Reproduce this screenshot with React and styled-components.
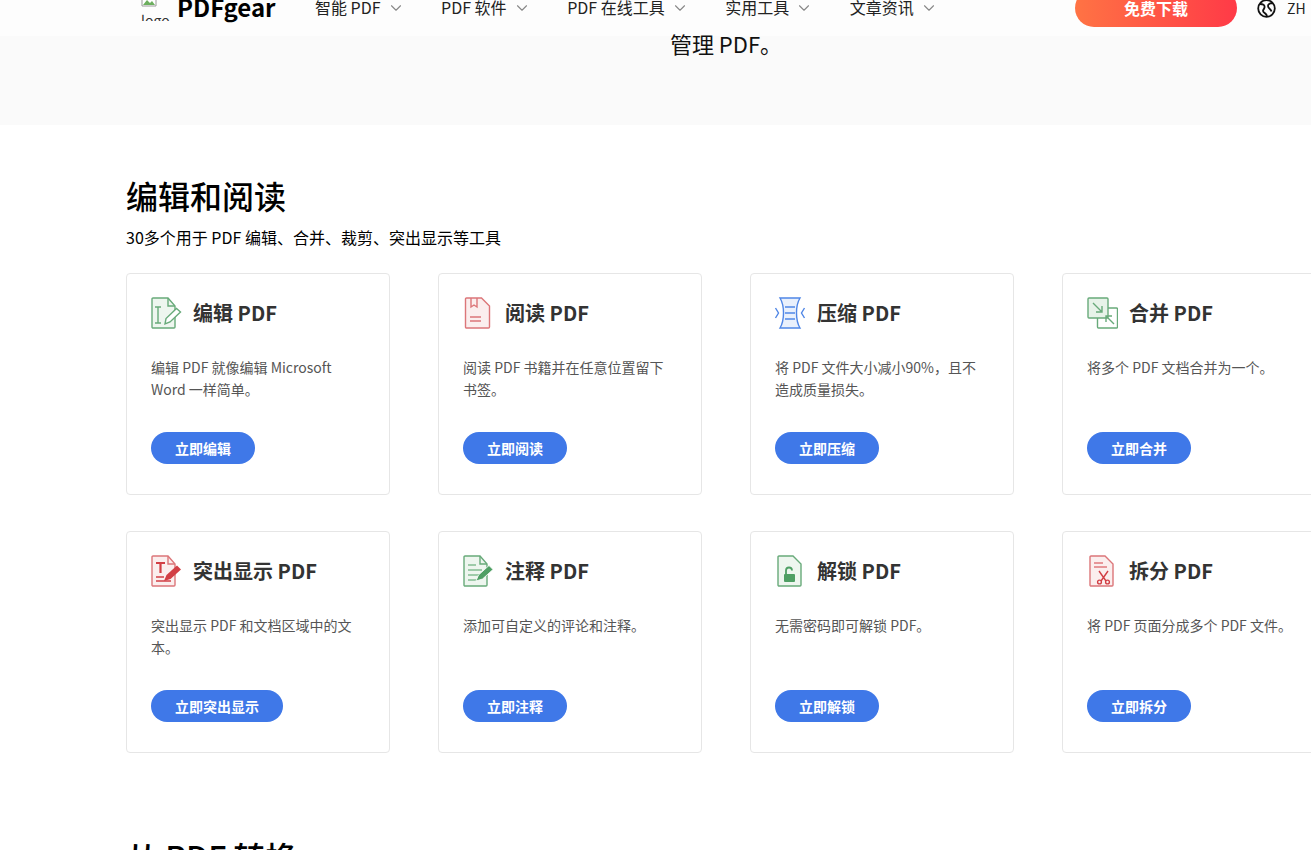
import React from "react";
import styled, { createGlobalStyle } from "styled-components";
import { ChevronDown } from "lucide-react";

const GlobalStyle = createGlobalStyle`
  html, body {
    margin: 0;
    height: 100%;
    overflow: hidden;
    background: #fff;
    font-family: "Noto Sans CJK SC", "Noto Sans", sans-serif;
    color: #000;
  }
`;

const Page = styled.div`
  width: 1452px;
  margin-top: -20px;
`;

const Nav = styled.header`
  height: 56px;
  background: #fdfdfd;
  display: flex;
  align-items: center;
  padding-left: 141px;
`;

const Logo = styled.a`
  display: flex;
  align-items: center;
  width: 174px;
  height: 56px;
`;

const BrokenImage = styled.span`
  display: block;
  width: 29px;
  height: 30px;
  margin: 11px 7px 0 0;
  overflow: hidden;
  align-self: flex-start;
  font-size: 14px;
  line-height: 26px;
  color: #333;
`;

const BrokenIcon = styled.svg`
  display: block;
  width: 16px;
  height: 16px;
`;

const LogoText = styled.span`
  font-size: 24px;
  font-weight: 700;
  line-height: 30px;
  margin-top: -2px;
`;

const NavList = styled.nav`
  display: flex;
  width: 760px;
  margin-top: -2px;
`;

const NavItem = styled.a`
  display: flex;
  align-items: center;
  gap: 6px;
  margin-right: 36.5px;
  font-size: 16px;
  line-height: 24px;
  color: #222;

  svg {
    margin-top: 2px;
    color: #888;
    stroke-width: 1.5;
  }
`;

const DownloadButton = styled.a`
  display: block;
  width: 162px;
  height: 38px;
  border-radius: 19px;
  background: linear-gradient(90deg, #ff7344, #ff3a47);
  color: #fff;
  font-size: 16px;
  font-weight: 700;
  line-height: 38px;
  text-align: center;
`;

const Lang = styled.a`
  display: flex;
  align-items: center;
  gap: 11px;
  margin-left: 20px;
  font-size: 14px;
  color: #222;
`;

const Hero = styled.section`
  height: 89px;
  background: #fafafa;
  font-size: 22px;
  line-height: 14px;
  text-align: center;
  color: #111;
`;

const Section = styled.section`
  padding: 50px 126px 0;
`;

const SectionTitle = styled.h2`
  margin: 0;
  font-size: 32px;
  font-weight: 500;
  line-height: 40px;
`;

const SectionNote = styled.p`
  margin: 10px 0 24px;
  font-size: 16px;
  line-height: 24px;
`;

const CardGrid = styled.div`
  display: grid;
  grid-template-columns: repeat(4, 264px);
  column-gap: 48px;
  row-gap: 36px;
`;

const Card = styled.article`
  box-sizing: border-box;
  height: 222px;
  padding: 23px 24px 0;
  border: 1px solid #e6e6e6;
  border-radius: 4px;
  background: #fff;
  display: flex;
  flex-direction: column;
  align-items: flex-start;
`;

const CardHead = styled.div`
  display: flex;
  align-items: center;
  gap: 11px;
  height: 32px;
`;

const CardIcon = styled.svg`
  display: block;
  width: 32px;
  height: 32px;
  margin-left: -1px;
  flex: none;
`;

const CardTitle = styled.h3`
  margin: 0;
  font-size: 20px;
  font-weight: 700;
  line-height: 32px;
  color: #333;
`;

const CardText = styled.p`
  margin: 27px 0 0;
  height: 64px;
  font-size: 14px;
  line-height: 22px;
  color: #555;
`;

const CardButton = styled.a`
  display: block;
  height: 32px;
  margin-top: 12px;
  padding: 0 24px;
  border-radius: 16px;
  background: #3f78e8;
  color: #fff;
  font-size: 14px;
  font-weight: 700;
  line-height: 33px;
`;

const NextTitle = styled(SectionTitle)`
  margin-top: 83px;
`;

const green = { line: "#68aa7a", fill: "#eef6ef", solid: "#4f9f64" };
const red = { line: "#dc7679", fill: "#fbeeee", solid: "#d23f45" };
const blue = { line: "#4f86e6", fill: "#e9f0fc" };

const DOC = "M3 1h15l7 8v21a1 1 0 0 1-1 1H3a1 1 0 0 1-1-1V2a1 1 0 0 1 1-1z";
const WIDE_DOC = "M5 1h14l8 8v21a1 1 0 0 1-1 1H5a1 1 0 0 1-1-1V2a1 1 0 0 1 1-1z";

const icons = {
  edit: (
    <g fill="none" stroke={green.line} strokeWidth="1.400">
      <path d={DOC} fill={green.fill} />
      <path d="M18 1v8h7" />
      <path d="M5 10h6M5 26h6M8 10v16" />
      <path d="M15 27l1-5.500 10.500-10 4 3.500-10.500 10z" fill="#fff" />
    </g>
  ),
  read: (
    <g fill={red.fill} stroke={red.line} strokeWidth="1.400" transform="translate(1.500 0)">
      <path d="M3 1h15l8 8v21a1 1 0 0 1-1 1H3a1 1 0 0 1-1-1V2a1 1 0 0 1 1-1z" />
      <path d="M7.500 1v9l3-2 3 2V1" fill="none" />
      <path d="M6.500 20h11M6.500 24h11" fill="none" />
    </g>
  ),
  compress: (
    <g fill="none" stroke={blue.line} strokeWidth="1.400">
      <path d="M6 1h20c-3 5-3.500 10-3.500 15s.5 10 3.500 15H6c3-5 3.500-10 3.500-15S9 6 6 1z" fill={blue.fill} />
      <path d="M11 10h10M11 16h10M11 22h10" />
      <path d="M1.500 11l3 5-3 5M30.500 11l-3 5 3 5" />
    </g>
  ),
  merge: (
    <g fill="none" stroke={green.line} strokeWidth="1.400" transform="translate(1 0)">
      <rect x="10.500" y="11" width="20" height="20" rx="1" fill="#fff" />
      <rect x="1" y="1" width="20" height="20" rx="1" fill="#e7f3e9" />
      <path d="M6 6l9 9M15 9v6H9" />
      <path d="M27 27l-8-8M19 25v-6h6" />
    </g>
  ),
  highlight: (
    <g fill="none" stroke={red.line} strokeWidth="1.400">
      <path d={DOC} fill={red.fill} />
      <path d="M18 1v8h7" />
      <path d="M6 8h9M10.500 8v10" stroke={red.solid} strokeWidth="2.200" />
      <path d="M6 22h8M6 26h15" stroke={red.solid} />
      <path d="M14 26l2.500-6 10.500-9.500 4 4-10.500 9.500z" fill={red.solid} stroke="none" />
    </g>
  ),
  note: (
    <g fill="none" stroke={green.line} strokeWidth="1.400">
      <path d={DOC} fill={green.fill} />
      <path d="M18 1v8h7" />
      <path d="M6 10h8M6 15h14M6 20h12M6 25h9" stroke={green.solid} strokeWidth="1.200" />
      <path d="M14 26l2.500-6 10.500-9.500 4 4-10.500 9.500z" fill={green.solid} stroke="#fff" strokeWidth=".8" />
    </g>
  ),
  unlock: (
    <g fill="none" stroke={green.line} strokeWidth="1.400">
      <path d={WIDE_DOC} fill={green.fill} />
      <path d="M12 19v-3.500a3 3 0 0 1 6 0" stroke={green.solid} strokeWidth="1.800" />
      <rect x="10" y="19" width="11" height="8" rx="1" fill={green.solid} stroke="none" />
    </g>
  ),
  split: (
    <g fill="none" stroke={red.line} strokeWidth="1.400">
      <path d={WIDE_DOC} fill={red.fill} />
      <path d="M8 8h9M8 12h13" stroke={red.solid} strokeWidth="1" />
      <path d="M13 16l7 10M22 16l-7 10" stroke={red.solid} />
      <circle cx="13.500" cy="27" r="1.900" stroke={red.solid} />
      <circle cx="21.500" cy="27" r="1.900" stroke={red.solid} />
    </g>
  ),
};

const navItems = ["智能 PDF", "PDF 软件", "PDF 在线工具", "实用工具", "文章资讯"];

const tools = [
  { icon: "edit", title: "编辑 PDF", text: "编辑 PDF 就像编辑 Microsoft Word 一样简单。", action: "立即编辑" },
  { icon: "read", title: "阅读 PDF", text: "阅读 PDF 书籍并在任意位置留下书签。", action: "立即阅读" },
  { icon: "compress", title: "压缩 PDF", text: "将 PDF 文件大小减小90%，且不造成质量损失。", action: "立即压缩" },
  { icon: "merge", title: "合并 PDF", text: "将多个 PDF 文档合并为一个。", action: "立即合并" },
  { icon: "highlight", title: "突出显示 PDF", text: "突出显示 PDF 和文档区域中的文本。", action: "立即突出显示" },
  { icon: "note", title: "注释 PDF", text: "添加可自定义的评论和注释。", action: "立即注释" },
  { icon: "unlock", title: "解锁 PDF", text: "无需密码即可解锁 PDF。", action: "立即解锁" },
  { icon: "split", title: "拆分 PDF", text: "将 PDF 页面分成多个 PDF 文件。", action: "立即拆分" },
];

const App = () => {
  return (
    <>
      <GlobalStyle />
      <Page>
        <Nav>
          <Logo>
            <BrokenImage>
              <BrokenIcon viewBox="0 0 16 16">
                <path d="M1 1h10l4 4v10H1z" fill="#fff" stroke="#999" />
                <path d="M2 14l4-5 3 3 2-2 3 4z" fill="#6cae5e" />
                <path d="M2 2h6v4H2z" fill="#bcd2f0" />
              </BrokenIcon>
              logo
            </BrokenImage>
            <LogoText>PDFgear</LogoText>
          </Logo>
          <NavList>
            {navItems.map((item) => (
              <NavItem key={item}>
                {item}
                <ChevronDown size={18} />
              </NavItem>
            ))}
          </NavList>
          <DownloadButton>免费下载</DownloadButton>
          <Lang>
            <svg width="19" height="19" viewBox="0 0 19 19" fill="none" stroke="#111" strokeWidth="1.800">
              <circle cx="9.500" cy="9.500" r="8.300" />
              <path d="M3 5c3 0 5 1 4.500 3.500S5 11 6.500 13s3 1 3.500 4.500M16 4c-3 0-5 .5-5 3s3 3 3.500 5.500" />
            </svg>
            ZH
          </Lang>
        </Nav>
        <Hero>管理 PDF。</Hero>
        <Section>
          <SectionTitle>编辑和阅读</SectionTitle>
          <SectionNote>30多个用于 PDF 编辑、合并、裁剪、突出显示等工具</SectionNote>
          <CardGrid>
            {tools.map((tool) => (
              <Card key={tool.icon}>
                <CardHead>
                  <CardIcon viewBox="0 0 32 32">{icons[tool.icon]}</CardIcon>
                  <CardTitle>{tool.title}</CardTitle>
                </CardHead>
                <CardText>{tool.text}</CardText>
                <CardButton>{tool.action}</CardButton>
              </Card>
            ))}
          </CardGrid>
          <NextTitle>从 PDF 转换</NextTitle>
        </Section>
      </Page>
    </>
  );
};

export default App;
